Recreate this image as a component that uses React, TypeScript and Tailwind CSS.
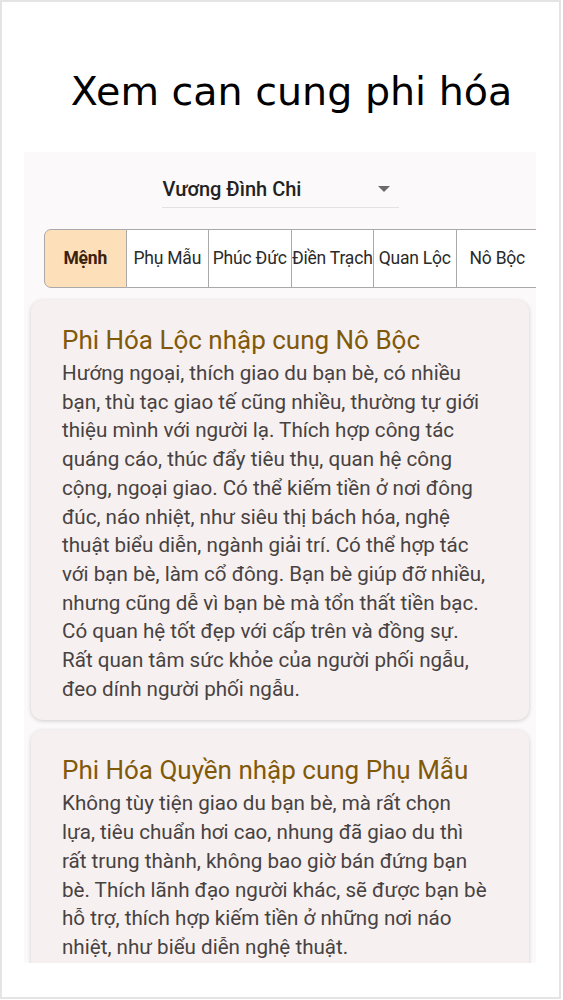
import { useState } from "react";

const PALACES = [
  "Mệnh",
  "Phụ Mẫu",
  "Phúc Đức",
  "Điền Trạch",
  "Quan Lộc",
  "Nô Bộc",
  "Thiên Di",
  "Tật Ách",
  "Tài Bạch",
  "Tử Tức",
  "Phu Thê",
  "Huynh Đệ",
];

const RESULTS = [
  {
    title: "Phi Hóa Lộc nhập cung Nô Bộc",
    body: "Hướng ngoại, thích giao du bạn bè, có nhiều bạn, thù tạc giao tế cũng nhiều, thường tự giới thiệu mình với người lạ. Thích hợp công tác quáng cáo, thúc đẩy tiêu thụ, quan hệ công cộng, ngoại giao. Có thể kiếm tiền ở nơi đông đúc, náo nhiệt, như siêu thị bách hóa, nghệ thuật biểu diễn, ngành giải trí. Có thể hợp tác với bạn bè, làm cổ đông. Bạn bè giúp đỡ nhiều, nhưng cũng dễ vì bạn bè mà tổn thất tiền bạc. Có quan hệ tốt đẹp với cấp trên và đồng sự. Rất quan tâm sức khỏe của người phối ngẫu, đeo dính người phối ngẫu.",
  },
  {
    title: "Phi Hóa Quyền nhập cung Phụ Mẫu",
    body: "Không tùy tiện giao du bạn bè, mà rất chọn lựa, tiêu chuẩn hơi cao, nhung đã giao du thì rất trung thành, không bao giờ bán đứng bạn bè. Thích lãnh đạo người khác, sẽ được bạn bè hỗ trợ, thích hợp kiếm tiền ở những nơi náo nhiệt, như biểu diễn nghệ thuật.",
  },
  {
    title: "Phi Hóa Khoa nhập cung Quan Lộc",
    body: "Làm việc có trật tự, có kế hoạch, coi trọng danh dự, được cấp trên tín nhiệm.",
  },
];

export default function App() {
  const [active, setActive] = useState(0);

  return (
    <div className="w-[561px] h-[999px] border-2 border-[#e4e4e4] bg-white overflow-hidden font-['Roboto',sans-serif]">
      <h1 className="pt-[66px] pl-[22px] text-center text-[39.6px] leading-[46px] text-black font-['DejaVu_Sans',sans-serif]">
        Xem can cung phi hóa
      </h1>

      <div className="mt-[38px] ml-[22px] w-[512px] h-[811px] bg-[#fbf9f9] overflow-hidden pt-[18px]">
        {/* person select */}
        <div className="mx-auto w-[237px] h-[38px] pl-[1px] pr-[9px] flex items-center justify-between border-b border-[#e2e2e2]">
          <span className="text-[20px] font-medium text-[#222]">Vương Đình Chi</span>
          <svg width="12" height="6" viewBox="0 0 12 6">
            <path d="M0 0h12L6 6z" fill="#6b6b6b" />
          </svg>
        </div>

        {/* palace tabs */}
        <div className="mt-[21px] ml-[20px] overflow-hidden">
          <div className="flex w-max">
            {PALACES.map((name, i) => (
              <button
                key={name}
                onClick={() => setActive(i)}
                className={
                  "w-[82.5px] h-[59px] shrink-0 flex items-center justify-center whitespace-nowrap text-[17.5px] tracking-[-0.2px] border-y border-r border-[#a9a9a9] first:border-l first:rounded-l-[7px] " +
                  (i === active
                    ? "bg-[#fddfba] font-bold text-[#3a220c]"
                    : "bg-white text-[#2a2a2a]")
                }
              >
                {name}
              </button>
            ))}
          </div>
        </div>

        {/* results */}
        <div className="mt-[12px] mx-[7px] flex flex-col gap-[10px]">
          {RESULTS.map((r) => (
            <div
              key={r.title}
              className="rounded-[12px] bg-[#f7f0f0] pt-[24px] pb-[17px] pl-[31px] pr-[40px] shadow-[0_1px_4px_rgba(0,0,0,0.18)]"
            >
              <h2 className="text-[26px] leading-[32px] text-[#80590a]">{r.title}</h2>
              <p className="mt-[3px] text-[20.6px] leading-[28.7px] text-[#474242]">{r.body}</p>
            </div>
          ))}
        </div>
      </div>
    </div>
  );
}
